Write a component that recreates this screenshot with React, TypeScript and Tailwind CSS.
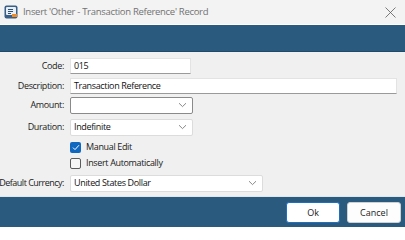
import React from 'react';

const font = { fontFamily: '"Open Sans", "Noto Sans", sans-serif' };

const Chevron = () => (
  <svg width="9" height="6" viewBox="0 0 9 6" className="text-[#7a7a7a]">
    <path d="M1 1.2 L4.5 4.6 L8 1.2" fill="none" stroke="currentColor" strokeWidth="0.9" />
  </svg>
);

const Label: React.FC<{ text: string; tight?: boolean }> = ({ text, tight }) => (
  <div
    className={
      tight
        ? 'w-[64px] shrink-0 flex justify-end text-[9px] tracking-[-0.5px] text-[#1a1a1a] whitespace-nowrap'
        : 'w-[64px] shrink-0 flex justify-end text-[9px] tracking-[-0.35px] text-[#1a1a1a] whitespace-nowrap'
    }
  >
    <span>{text}</span>
  </div>
);

const App: React.FC = () => {
  return (
    <div className="w-[405px] h-[227px] flex flex-col bg-[#f0f0f0] overflow-hidden" style={font}>
      {/* Title bar */}
      <div className="h-[25px] shrink-0 bg-[#f3f3f3] border-b border-white flex items-center pl-[4px] pr-[9px]">
        <svg width="14" height="14" viewBox="0 0 14 14">
          <rect x="0.5" y="0.5" width="13" height="13" rx="2" fill="#3b5f86" />
          <rect x="2" y="2" width="10" height="8" rx="1" fill="#e8eef5" />
          <path d="M4 4.5 h5 M4 6.5 h5 M4 8.5 h3" stroke="#2e4e72" strokeWidth="1" />
          <rect x="8" y="9" width="5" height="3" fill="#f08a24" />
        </svg>
        <div className="ml-[5px] text-[9.5px] tracking-[-0.3px] text-[#727272] leading-none">Insert 'Other - Transaction Reference' Record</div>
        <div className="ml-auto">
          <svg width="11" height="11" viewBox="0 0 11 11">
            <path d="M0.5 0.5 L10.5 10.5 M10.5 0.5 L0.5 10.5" stroke="#5a5a5a" strokeWidth="0.8" />
          </svg>
        </div>
      </div>

      {/* Top band */}
      <div className="h-[27px] shrink-0 bg-[#2a5b7f] border-b border-[#1f4a6a]" />

      {/* Form */}
      <div className="flex-1 flex flex-col pt-[6px] text-[9px] tracking-[-0.35px] text-[#111]">
        <div className="flex items-center gap-[6px] h-[16px]">
          <Label text="Code:" />
          <div className="w-[121px] h-[16px] bg-white border border-[#e3e3e3] border-b-[#9a9a9a] flex items-center px-[3px]">015</div>
        </div>
        <div className="flex items-center gap-[6px] h-[16px] mt-[4px]">
          <Label text="Description:" />
          <div className="w-[327px] h-[16px] bg-white border border-[#e3e3e3] border-b-[#9a9a9a] flex items-center px-[3px]">Transaction Reference</div>
        </div>
        <div className="flex items-center gap-[6px] h-[16px] mt-[3px]">
          <Label text="Amount:" />
          <div className="w-[123px] h-[17px] bg-white border border-[#8a8a8a] rounded-[2px] flex items-center justify-end pr-[5px]">
            <Chevron />
          </div>
        </div>
        <div className="flex items-center gap-[6px] h-[16px] mt-[6px]">
          <Label text="Duration:" />
          <div className="w-[123px] h-[17px] bg-white border border-[#dcdcdc] rounded-[2px] flex items-center justify-between pl-[3px] pr-[5px]">
            <span>Indefinite</span>
            <Chevron />
          </div>
        </div>
        <div className="flex items-center h-[12px] mt-[6px] pl-[70px]">
          <div className="w-[11px] h-[11px] rounded-[2px] bg-[#0f67c0] flex items-center justify-center">
            <svg width="8" height="7" viewBox="0 0 8 7">
              <path d="M1 3.6 L3 5.6 L7 1.2" fill="none" stroke="white" strokeWidth="1" />
            </svg>
          </div>
          <span className="ml-[5px] text-[#1a1a1a]">Manual Edit</span>
        </div>
        <div className="flex items-center h-[12px] mt-[4px] pl-[70px]">
          <div className="w-[11px] h-[11px] rounded-[2px] bg-[#f7f7f7] border border-[#5c5c5c]" />
          <span className="ml-[5px] text-[#1a1a1a]">Insert Automatically</span>
        </div>
        <div className="flex items-center gap-[5px] h-[16px] mt-[6px]">
          <Label text="Default Currency:" tight />
          <div className="ml-[1px] w-[193px] h-[17px] bg-white border border-[#dcdcdc] rounded-[2px] flex items-center justify-between pl-[3px] pr-[5px]">
            <span>United States Dollar</span>
            <Chevron />
          </div>
        </div>
      </div>

      {/* Bottom band */}
      <div className="h-[31px] shrink-0 bg-[#2a5b7f] border-t border-[#dfe6ec] flex items-center justify-end gap-[7px] pr-[4px] pt-[1px]">
        <button className="w-[54px] h-[21px] bg-white rounded-[3px] border border-[#1f6fc0] text-[9px] text-[#1a1a1a]">Ok</button>
        <button className="w-[54px] h-[21px] bg-[#fdfdfd] rounded-[3px] border border-[#d0d0d0] text-[9px] text-[#1a1a1a]">Cancel</button>
      </div>
    </div>
  );
};

export default App;
